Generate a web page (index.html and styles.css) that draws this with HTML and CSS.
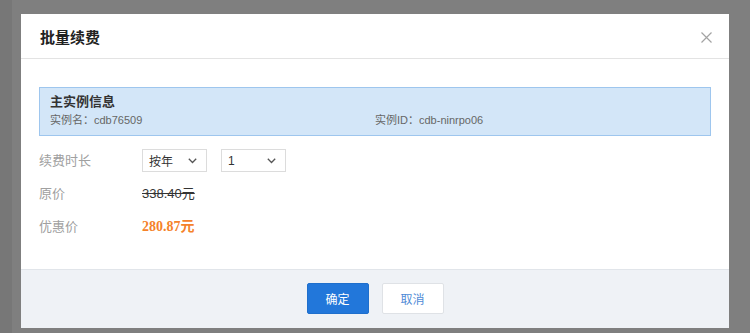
FILE: index.html
```html
<!DOCTYPE html>
<html lang="zh-CN">
<head>
<meta charset="UTF-8">
<title>批量续费</title>
<link rel="stylesheet" href="styles.css">
</head>
<body>
<div class="page">
  <div class="side"></div>
  <section class="dialog">
    <header class="dialog-head">
      <h2>批量续费</h2>
      <span class="close">
        <svg width="11" height="11" viewBox="0 0 11 11"><path d="M0.5 0.5L10.5 10.5M10.5 0.5L0.5 10.5" stroke="#a3a3a3" stroke-width="1.2" fill="none"/></svg>
      </span>
    </header>

    <div class="dialog-body">
      <div class="info-box">
        <div class="info-title">主实例信息</div>
        <div class="info-row">
          <span>实例名：cdb76509</span>
          <span>实例ID：cdb-ninrpo06</span>
        </div>
      </div>

      <div class="form-row">
        <label>续费时长</label>
        <div class="selects">
          <div class="select"><span>按年</span><svg width="9" height="6" viewBox="0 0 9 6"><path d="M0.8 0.8L4.5 4.5L8.2 0.8" stroke="#555" stroke-width="1.3" fill="none"/></svg></div>
          <div class="select"><span>1</span><svg width="9" height="6" viewBox="0 0 9 6"><path d="M0.8 0.8L4.5 4.5L8.2 0.8" stroke="#555" stroke-width="1.3" fill="none"/></svg></div>
        </div>
      </div>

      <div class="form-row">
        <label>原价</label>
        <span class="old-price">338.40元</span>
      </div>

      <div class="form-row">
        <label>优惠价</label>
        <span class="new-price">280.87元</span>
      </div>
    </div>

    <footer class="dialog-foot">
      <button class="btn btn-primary">确定</button>
      <button class="btn">取消</button>
    </footer>
  </section>
</div>
</body>
</html>
```

FILE: styles.css
```css
* {
  margin: 0;
  padding: 0;
  box-sizing: border-box;
  font-family: "Liberation Sans", "Noto Sans CJK SC", sans-serif;
}

body {
  background: #7f7f7f;
  width: 750px;
  height: 333px;
  overflow: hidden;
}

.page {
  display: flex;
  height: 333px;
}

.side {
  width: 12px;
  background: #777;
}

.dialog {
  margin: 14px 0 0 9px;
  width: 708px;
  height: 314px;
  background: #fff;
  display: flex;
  flex-direction: column;
}

.dialog-head {
  height: 45px;
  border-bottom: 1px solid #e3e3e3;
  display: flex;
  align-items: center;
  justify-content: space-between;
  padding: 0 17px 0 19px;
}

.dialog-head h2 {
  font-size: 15px;
  font-weight: 700;
  color: #222;
}

.close {
  display: flex;
  margin-top: 2px;
}

.dialog-body {
  flex: 1;
  padding: 28px 18px 0 18px;
}

.info-box {
  height: 49px;
  background: #d3e6f8;
  border: 1px solid #9ec6ee;
  padding: 6px 10px 0 10px;
}

.info-title {
  font-size: 13px;
  font-weight: 700;
  color: #333;
  line-height: 16px;
}

.info-row {
  display: grid;
  grid-template-columns: 1fr 1fr;
  margin-top: 3px;
  font-size: 11px;
  color: #666;
  line-height: 14px;
}

.form-row {
  display: flex;
  align-items: center;
  height: 23px;
  margin-top: 13px;
}

.form-row + .form-row {
  margin-top: 10px;
}

.form-row label {
  width: 103px;
  font-size: 13px;
  color: #a0a0a0;
  margin-top: -3px;
}

.selects {
  display: flex;
  gap: 14px;
}

.select {
  width: 65px;
  height: 23px;
  border: 1px solid #dcdcdc;
  display: flex;
  align-items: center;
  justify-content: space-between;
  padding: 0 9px 0 6px;
  font-size: 12px;
  color: #333;
}

.old-price {
  font-size: 13px;
  color: #333;
  text-decoration: line-through;
  margin-top: -3px;
}

.new-price {
  font-family: "Liberation Serif", "Noto Sans CJK SC", serif;
  font-size: 14px;
  font-weight: 700;
  color: #f5822a;
  margin-top: -3px;
}

.dialog-foot {
  height: 59px;
  background: #eff2f6;
  border-top: 1px solid #e1e5ea;
  display: flex;
  justify-content: center;
  align-items: flex-start;
  gap: 13px;
  padding-top: 13px;
}

.btn {
  width: 62px;
  height: 31px;
  border: 1px solid #dfe2e6;
  background: #fff;
  color: #4f8bd6;
  font-size: 12px;
  border-radius: 2px;
  font-family: "Noto Sans CJK SC", sans-serif;
}

.btn-primary {
  background: #2277da;
  border-color: #1f6fcc;
  color: #fff;
}
```
